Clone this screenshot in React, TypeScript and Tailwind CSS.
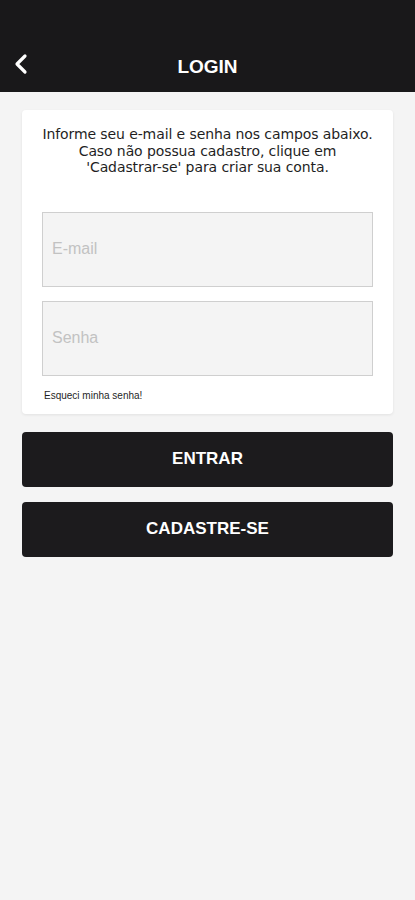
import React from 'react';

export default function App() {
  return (
    <div className="min-h-[900px] bg-[#f4f4f4] font-['Liberation_Sans',Arial,sans-serif]">
      {/* Header */}
      <div className="h-[92px] bg-[#19181a] flex items-end pb-[14px] relative">
        <button className="absolute left-[12px] bottom-[16px] text-white">
          <svg width="20" height="24" viewBox="0 0 20 24" fill="none">
            <path d="M13 4 L5 12 L13 20" stroke="white" strokeWidth="3.2" strokeLinecap="round" strokeLinejoin="round" />
          </svg>
        </button>
        <h1 className="w-full text-center text-white font-bold text-[19px] leading-[22px]">LOGIN</h1>
      </div>

      <div className="px-[22px] pt-[18px]">
        {/* Card */}
        <div className="bg-white rounded-[4px] shadow-[0_1px_3px_rgba(0,0,0,0.08)] px-[20px] pt-[16px] pb-[12px]">
          <p className="text-center text-[14px] leading-[16.5px] text-[#1f1f1f] font-['DejaVu_Sans',sans-serif] tracking-[-0.1px]">
            Informe seu e-mail e senha nos campos abaixo.
            <br />
            Caso não possua cadastro, clique em
            <br />
            'Cadastrar-se' para criar sua conta.
          </p>

          <div className="mt-[36px] flex flex-col gap-[14px]">
            <input
              placeholder="E-mail"
              className="h-[75px] w-full bg-[#f4f4f4] border-[1.5px] border-[#cfcfcf] px-[9px] text-[16px] text-[#333] placeholder:text-[#c2c2c2] outline-none"
            />
            <input
              type="password"
              placeholder="Senha"
              className="h-[75px] w-full bg-[#f4f4f4] border-[1.5px] border-[#cfcfcf] px-[9px] text-[16px] text-[#333] placeholder:text-[#c2c2c2] outline-none"
            />
          </div>

          <a className="block mt-[14px] ml-[2px] text-[10px] leading-[12px] text-[#1f1f1f]">Esqueci minha senha!</a>
        </div>

        {/* Buttons */}
        <div className="mt-[18px] flex flex-col gap-[15px]">
          <button className="h-[55px] w-full rounded-[4px] bg-[#1c1b1d] text-white font-bold text-[17px]">ENTRAR</button>
          <button className="h-[55px] w-full rounded-[4px] bg-[#1c1b1d] text-white font-bold text-[17px]">CADASTRE-SE</button>
        </div>
      </div>
    </div>
  );
}
